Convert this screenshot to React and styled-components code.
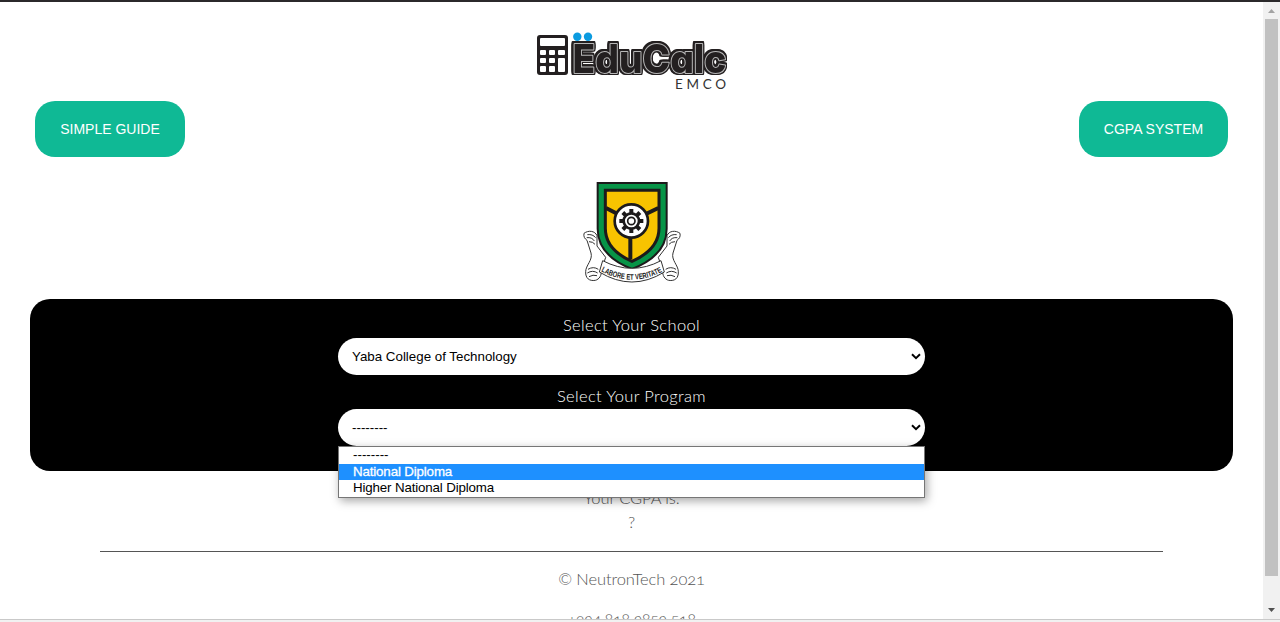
import React from "react";
import styled, { createGlobalStyle } from "styled-components";

const GlobalStyle = createGlobalStyle`
  * { box-sizing: border-box; }
  body { margin: 0; background: #fff; overflow: hidden; }
`;

const Window = styled.div`
  height: 622px;
  display: grid;
  grid-template-rows: 2px 617px 3px;
  background: #fff;
`;
const TopEdge = styled.div`background: #2b292b;`;
const BottomEdge = styled.div`
  background: #f1f1f1;
  border-top: 1px solid #c9c9c9;
`;
const Viewport = styled.div`
  display: grid;
  grid-template-columns: 1fr 17px;
  min-height: 0;
`;
const Page = styled.main`
  overflow: hidden;
  text-align: center;
  font-family: Lato, sans-serif;
  font-weight: 300;
  font-size: 16.5px;
  line-height: 22px;
  color: #555;
`;

const Scrollbar = styled.div`
  background: #f1f1f1;
  display: grid;
  grid-template-rows: 17px 1fr 17px;
  justify-items: center;
`;
const Thumb = styled.div`
  width: 13px;
  height: 557px;
  background: #c1c1c1;
`;
const Arrow = styled.svg`
  display: block;
  width: 17px;
  height: 17px;
  fill: ${(p) => p.$color};
`;

const Logo = styled.svg`
  display: block;
  width: 200px;
  height: 67px;
  margin: 26px auto 6px 532px;
`;
const Wordmark = styled.text`
  font-family: Inter, sans-serif;
  font-weight: 800;
  font-size: 39px;
  font-feature-settings: "cv11", "ss03";
  fill: #231f20;
  stroke: #b8b8b8;
  stroke-width: 2px;
  stroke-linejoin: round;
  paint-order: stroke;
  filter: drop-shadow(1.3px 0 #231f20) drop-shadow(-1.3px 0 #231f20)
    drop-shadow(0 1.3px #231f20) drop-shadow(0 -1.3px #231f20);
`;
const Nav = styled.nav`
  display: flex;
  justify-content: space-between;
  padding: 0 35px;
`;
const PillButton = styled.button`
  width: ${(p) => p.$width}px;
  height: 56px;
  padding: 0;
  border: 0;
  border-radius: 20px;
  background: #0fb995;
  color: #fff;
  font: 14px "Liberation Sans", Arial, sans-serif;
`;
const Crest = styled.svg`
  display: block;
  width: 98px;
  height: 101px;
  margin: 25px auto 16px;
`;

const Panel = styled.section`
  height: 172px;
  margin: 0 30px;
  padding: 15px 0 25px;
  border-radius: 20px;
  background: #000;
  color: #fff;
  display: flex;
  flex-direction: column;
  align-items: center;
  gap: 10px;
`;
const Field = styled.div`
  position: relative;
  width: 587px;
`;
const Label = styled.div`
  height: 24px;
  letter-spacing: 0.34px;
`;
const SelectBox = styled.div`
  height: 37px;
  padding: 0 4px 0 14px;
  border-radius: 20px;
  background: #fff;
  color: #000;
  display: flex;
  align-items: center;
  justify-content: space-between;
  font: 13.333px "Liberation Sans", Arial, sans-serif;
`;
const Options = styled.div`
  position: absolute;
  top: 61px;
  left: 0;
  width: 587px;
  height: 52px;
  border: 1px solid #767676;
  background: #fff;
  box-shadow: 2px 3px 9px rgba(0, 0, 0, 0.35);
`;
const Option = styled.div`
  height: 16px;
  padding-left: 14px;
  text-align: left;
  font: 13.333px/15px "Liberation Sans", Arial, sans-serif;
  letter-spacing: ${(p) => p.$spacing || 0}px;
  color: ${(p) => (p.$active ? "#fff" : "#000")};
  background: ${(p) => (p.$active ? "#1e90ff" : "#fff")};
  -webkit-text-stroke: ${(p) => (p.$active ? "0.3px #fff" : "0")};
  &:first-child { margin-bottom: 1px; }
`;

const Result = styled.section`padding-top: 16px;`;
const Line = styled.div`
  height: 24px;
  letter-spacing: ${(p) => p.$spacing || 0}px;
  font-feature-settings: "onum";
`;
const Divider = styled.hr`
  height: 1px;
  margin: 16px 100px;
  border: 0;
  background: #555;
`;
const Footer = styled.footer`
  display: flex;
  flex-direction: column;
  gap: 16px;
`;

function EduCalcLogo() {
  return (
    <Logo viewBox="0 0 200 67">
      <rect x="5" y="7" width="31" height="40" rx="3" fill="#231f20" />
      <rect x="8" y="10" width="25" height="8" rx="1" fill="#fff" />
      <g fill="#fff">
        <rect x="8" y="22" width="6" height="5" rx="1" />
        <rect x="17" y="22" width="6" height="5" rx="1" />
        <rect x="26" y="22" width="7" height="5" rx="1" />
        <rect x="8" y="30" width="6" height="5" rx="1" />
        <rect x="17" y="30" width="6" height="5" rx="1" />
        <rect x="26" y="30" width="7" height="14" rx="1" />
        <rect x="8" y="38" width="6" height="6" rx="1" />
        <rect x="17" y="38" width="6" height="6" rx="1" />
      </g>
      <Wordmark x="40.5" y="44.8" textLength="154" lengthAdjust="spacingAndGlyphs">EduCalc</Wordmark>
      <circle cx="45.3" cy="8.7" r="4.2" fill="#0b9be0" />
      <circle cx="56" cy="8.7" r="4.2" fill="#0b9be0" />
      <text x="143" y="61" textLength="51" fontFamily="Lato, sans-serif" fontWeight="400" fontSize="13.5" fill="#333">EMCO</text>
    </Logo>
  );
}

function SchoolCrest() {
  const teeth = [0, 45, 90, 135, 180, 225, 270, 315];
  return (
    <Crest viewBox="24 20 294 303">
      <g fill="#fff" stroke="#333" strokeWidth="3" strokeLinejoin="round">
        <path d="M66 181C60 166 40 164 27 174C25 184 29 190 36 195L48 233C54 254 32 270 32 289C31 309 43 318 61 315C73 312 80 300 79 286L92 246L66 212Z" />
        <path d="M276 181C282 166 302 164 315 174C317 184 313 190 306 195L294 233C288 254 310 270 310 289C311 309 299 318 281 315C269 312 262 300 263 286L250 246L276 212Z" />
        <path d="M37 178q16-2 25 9M35 187q16-2 23 10M42 199q12 0 18 8M39 282q16-10 31 0M37 293q16-10 31 0M42 304q12-7 24-3" fill="none" />
        <path d="M305 178q-16-2-25 9M307 187q-16-2-23 10M300 199q-12 0-18 8M303 282q-16-10-31 0M305 293q-16-10-31 0M300 304q-12-7-24-3" fill="none" />
      </g>
      <path d="M68 23H275V160C275 214 238 255 171 281C104 255 68 214 68 160Z" fill="#079447" stroke="#1c1a1b" strokeWidth="6" />
      <path d="M91 45H252V159C252 203 221 236 171 258C120 236 91 203 91 159Z" fill="#f8c300" stroke="#1c1a1b" strokeWidth="9" />
      <path d="M169 137L93 98M169 137L250 98M166 137V252" stroke="#1c1a1b" strokeWidth="12" />
      <circle cx="169" cy="137" r="50" fill="#fff" stroke="#1c1a1b" strokeWidth="8" />
      {teeth.map((a) => (
        <rect key={a} x="163" y="101" width="12" height="15" fill="#1c1a1b" transform={`rotate(${a} 169 137)`} />
      ))}
      <circle cx="169" cy="137" r="23" fill="#fff" stroke="#1c1a1b" strokeWidth="8" />
      <circle cx="169" cy="137" r="11" fill="#fff" stroke="#1c1a1b" strokeWidth="5" />
      <path d="M83 256Q171 302 258 256L268 290Q171 350 73 290Z" fill="#fff" stroke="#333" strokeWidth="3" />
      <path id="motto" d="M78 288Q171 338 265 288" fill="none" />
      <text fontFamily="Liberation Sans, Arial, sans-serif" fontWeight="700" fontSize="24" fill="#222">
        <textPath href="#motto" textLength="192" lengthAdjust="spacingAndGlyphs">LABORE ET VERITATE</textPath>
      </text>
    </Crest>
  );
}

function Chevron() {
  return (
    <svg width="10" height="8" viewBox="0 0 10 8">
      <path d="M1 1.3L5 5.1L9 1.3" fill="none" stroke="#000" strokeWidth="2" />
    </svg>
  );
}

export default function App() {
  return (
    <Window>
      <GlobalStyle />
      <TopEdge />
      <Viewport>
        <Page>
          <EduCalcLogo />
          <Nav>
            <PillButton $width={150}>SIMPLE GUIDE</PillButton>
            <PillButton $width={149}>CGPA SYSTEM</PillButton>
          </Nav>
          <SchoolCrest />
          <Panel>
            <Field>
              <Label>Select Your School</Label>
              <SelectBox>Yaba College of Technology<Chevron /></SelectBox>
            </Field>
            <Field>
              <Label>Select Your Program</Label>
              <SelectBox>--------<Chevron /></SelectBox>
              <Options>
                <Option>--------</Option>
                <Option $active $spacing={-0.15}>National Diploma</Option>
                <Option $spacing={-0.15}>Higher National Diploma</Option>
              </Options>
            </Field>
          </Panel>
          <Result>
            <Line $spacing={-0.1}>Your CGPA is:</Line>
            <Line>?</Line>
          </Result>
          <Divider />
          <Footer>
            <Line $spacing={-0.1}>© NeutronTech 2021</Line>
            <Line $spacing={-0.6}>+234 818 3853 518</Line>
          </Footer>
        </Page>
        <Scrollbar>
          <Arrow viewBox="0 0 17 17" $color="#a3a3a3"><path d="M5 11L8.5 7L12 11Z" /></Arrow>
          <Thumb />
          <Arrow viewBox="0 0 17 17" $color="#505050"><path d="M5 6L8.5 10L12 6Z" /></Arrow>
        </Scrollbar>
      </Viewport>
      <BottomEdge />
    </Window>
  );
}
